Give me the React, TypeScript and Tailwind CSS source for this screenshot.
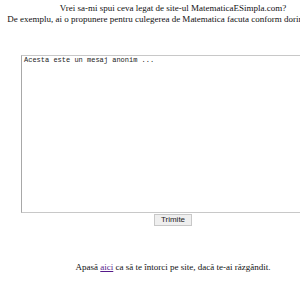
import React from "react"

const App = () => {
  return (
    <div className="w-[346px] bg-white text-center text-[#111] font-['Liberation_Serif',serif] text-[9px] leading-[11px]">
      <div className="pt-[3px]">
        <p className="whitespace-nowrap">Vrei sa-mi spui ceva legat de site-ul MatematicaESimpla.com?</p>
        <p className="whitespace-nowrap">De exemplu, ai o propunere pentru culegerea de Matematica facuta conform dorintelor tale?</p>
      </div>
      <div className="pt-[30px] flex flex-col items-center">
        <textarea
          className="w-[304px] h-[158px] resize-none border border-[#c8c8c8] border-l-[#a8a8a8] px-[2px] py-0 font-['Liberation_Mono',monospace] text-[7px] leading-[9px] text-[#222] outline-none"
          defaultValue="Acesta este un mesaj anonim ..."
        />
        <button className="mt-[1px] h-[12px] px-[6px] bg-[#efefef] border border-[#c8c8c8] font-['Liberation_Sans',sans-serif] text-[8px] leading-[10px] text-[#222]">
          Trimite
        </button>
      </div>
      <p className="pt-[36px] whitespace-nowrap">
        Apasă <a href="#" className="text-[#551a8b] underline">aici</a> ca să te întorci pe site, dacă te-ai răzgândit.
      </p>
    </div>
  )
}

export default App
